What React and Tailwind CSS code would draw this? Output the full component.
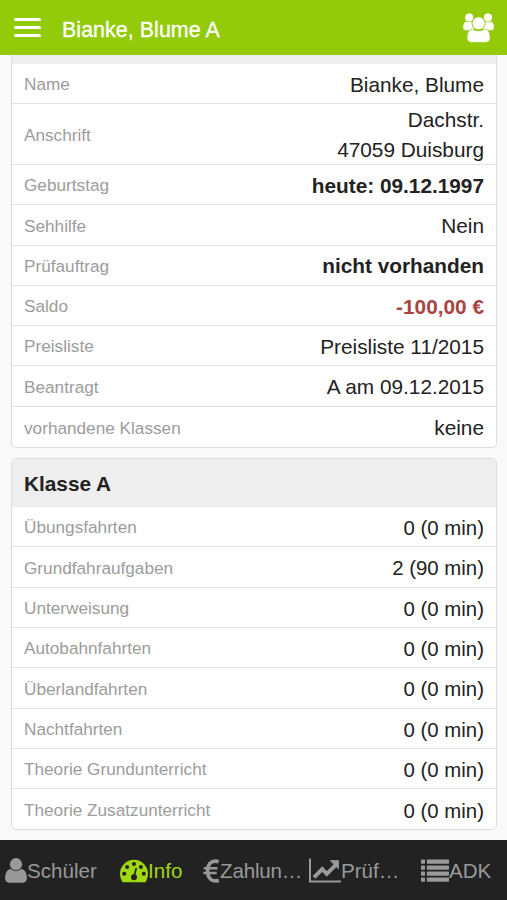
import { useState } from 'react'

const STAMMDATEN = [
  { label: 'Name', wert: 'Bianke, Blume' },
  { label: 'Anschrift', wert: ['Dachstr.', '47059 Duisburg'] },
  { label: 'Geburtstag', wert: 'heute: 09.12.1997', stil: 'font-bold' },
  { label: 'Sehhilfe', wert: 'Nein' },
  { label: 'Prüfauftrag', wert: 'nicht vorhanden', stil: 'font-bold' },
  { label: 'Saldo', wert: '-100,00 €', stil: 'font-bold text-[#a94442]' },
  { label: 'Preisliste', wert: 'Preisliste 11/2015' },
  { label: 'Beantragt', wert: 'A am 09.12.2015' },
  { label: 'vorhandene Klassen', wert: 'keine' },
]

const FAHRTEN = [
  { label: 'Übungsfahrten', wert: '0 (0 min)' },
  { label: 'Grundfahraufgaben', wert: '2 (90 min)' },
  { label: 'Unterweisung', wert: '0 (0 min)' },
  { label: 'Autobahnfahrten', wert: '0 (0 min)' },
  { label: 'Überlandfahrten', wert: '0 (0 min)' },
  { label: 'Nachtfahrten', wert: '0 (0 min)' },
  { label: 'Theorie Grundunterricht', wert: '0 (0 min)' },
  { label: 'Theorie Zusatzunterricht', wert: '0 (0 min)' },
]

function IconGruppe() {
  return (
    <svg viewBox="0 0 32 30" className="mt-0.5 w-8 h-[30px]" fill="#fff">
      <circle cx="6.2" cy="4.6" r="4.1" />
      <circle cx="25" cy="4.6" r="4.1" />
      <path d="M3 8.400c2 1.200 4.600 1.100 6.300.2 0 3 1.200 5.400 2.900 7.100-1.500.2-2.600.7-3.400 1.500H3.200C1.300 17.200.2 16 .2 14.200c0-2.500.9-5 2.800-5.800z" />
      <path d="M28.200 8.400c-2 1.200-4.600 1.100-6.300.2 0 3-1.200 5.400-2.900 7.100 1.500.2 2.600.7 3.400 1.500h5.600c1.900 0 3-1.200 3-3 0-2.500-.9-5-2.800-5.800z" />
      <path d="M9.300 16c3.800 2.400 8.800 2.400 12.600 0 3.600.3 5.300 4.600 5.300 8.800 0 2.800-1.700 4.600-4.400 4.600H8.400c-2.700 0-4.400-1.800-4.400-4.600 0-4.200 1.700-8.500 5.300-8.800z" stroke="#93cb0b" strokeWidth="0.7" />
      <circle cx="15.6" cy="10.3" r="6.6" stroke="#93cb0b" strokeWidth="1" />
    </svg>
  )
}

function IconPerson() {
  return (
    <svg viewBox="0 0 22 25" className="w-[22px] h-[25px]" fill="currentColor">
      <circle cx="11" cy="6.2" r="6.1" />
      <path d="M6 11.100c3 2.600 7 2.600 10 0 4.300.3 5.900 4.700 5.900 9.200 0 2.700-1.600 4.400-4.100 4.400H4.200C1.700 24.700.1 23 .1 20.300c0-4.500 1.600-8.900 5.900-9.200z" />
    </svg>
  )
}

function IconTacho() {
  return (
    <svg viewBox="0 0 28 24" className="w-7 h-6">
      <path d="M14 .8a14 14 0 0 0-14 14c0 2.700.8 5.300 2.200 7.900.2.400.6.600 1 .600h21.600c.4 0 .8-.2 1-.6 1.400-2.600 2.200-5.200 2.200-7.900A14 14 0 0 0 14 .8z" fill="currentColor" />
      <g fill="#222">
        <circle cx="4.2" cy="14.8" r="2" />
        <circle cx="7.1" cy="8" r="2" />
        <circle cx="14" cy="5" r="2" />
        <circle cx="20.9" cy="8" r="2" />
        <circle cx="23.8" cy="14.8" r="2" />
        <circle cx="14" cy="18.2" r="3" />
      </g>
      <path d="M14.200 17l1.900-7.400" stroke="#222" strokeWidth="1.7" strokeLinecap="round" />
    </svg>
  )
}

function IconEuro() {
  return (
    <svg viewBox="0 0 17 24" className="w-[17px] h-6" fill="none" stroke="currentColor">
      <path d="M15.600 2.800C9.500.5 4.600 4.500 4.600 12s4.900 11.600 11.200 9.200" strokeWidth="3.6" />
      <path d="M.8 9.300h13.700M.3 13.900h13.400" strokeWidth="2.5" />
    </svg>
  )
}

function IconVerlauf() {
  return (
    <svg viewBox="0 0 32 25" className="w-8 h-[25px]">
      <path d="M1 .5v23h31" fill="none" stroke="currentColor" strokeWidth="2" />
      <path d="M5 19.400l8.200-8.200 4.600 4.600 9-9" fill="none" stroke="currentColor" strokeWidth="4" />
      <path d="M21.200 2.600h8.300v8.300z" fill="currentColor" stroke="currentColor" strokeWidth="0.8" strokeLinejoin="round" />
    </svg>
  )
}

function IconListe() {
  return (
    <svg viewBox="0 0 28 24" className="w-7 h-6" fill="currentColor">
      {[0.5, 6.5, 12.5, 18.5].map(y => (
        <g key={y}>
          <rect x="0" y={y} width="4" height="4.2" rx="0.6" />
          <rect x="5.8" y={y} width="22.2" height="4.2" rx="0.6" />
        </g>
      ))}
    </svg>
  )
}

const TABS = [
  { key: 'schueler', label: 'Schüler', Icon: IconPerson, stil: 'ml-[5px] w-[115px]' },
  { key: 'info', label: 'Info', Icon: IconTacho, stil: 'w-[83px]' },
  { key: 'zahlungen', label: 'Zahlun…', Icon: IconEuro, stil: 'w-[106px] tracking-[-0.2px]' },
  { key: 'pruefungen', label: 'Prüf…', Icon: IconVerlauf, stil: 'w-28' },
  { key: 'adk', label: 'ADK', Icon: IconListe, stil: 'w-20' },
]

function Zeile({ label, wert, stil = '' }) {
  const zeilen = Array.isArray(wert) ? wert : [wert]
  return (
    <div className={`${zeilen.length > 1 ? 'h-[61px]' : 'h-[40.3px]'} flex shrink-0 items-center justify-between border-b border-[#e2e2e2] px-3 pt-[3px] last:border-b-0`}>
      <span className="text-[17.2px] text-[#9c9c9c]">{label}</span>
      <div className={`text-right leading-[30.5px] ${stil}`}>
        {zeilen.map(z => <div key={z}>{z}</div>)}
      </div>
    </div>
  )
}

export default function App() {
  const [aktiv, setAktiv] = useState('info')

  return (
    <div className="flex h-[900px] w-[507px] flex-col overflow-hidden bg-[#f9f9f9] font-['Liberation_Sans',sans-serif] text-[#222]">
      <header className="flex h-[54.5px] shrink-0 items-center bg-[#93cb0b] pr-3 pl-3.5 text-white">
        <button className="flex w-[27px] flex-col gap-[5px]">
          <span className="h-[3px] rounded-full bg-white" />
          <span className="h-[3px] rounded-full bg-white" />
          <span className="h-[3px] rounded-full bg-white" />
        </button>
        <h1 className="ml-[21px] flex-1 pt-[5px] text-[21.4px] tracking-[0.06px] [-webkit-text-stroke:0.3px_white]">Bianke, Blume A</h1>
        <IconGruppe />
      </header>

      <main className="flex min-h-0 flex-1 flex-col pr-2.5 pl-[11px]">
        <section className="flex h-[393px] shrink-0 flex-col rounded-b-[5px] border border-t-0 border-[#dcdcdc] bg-white text-[20.8px]">
          <div className="h-[9.2px] shrink-0 bg-[#eee]" />
          {STAMMDATEN.map(z => <Zeile key={z.label} {...z} />)}
        </section>

        <section className="mt-2.5 flex h-[372px] shrink-0 flex-col overflow-hidden rounded-[5px] border border-[#dcdcdc] bg-white text-[20.4px]">
          <h2 className="flex h-[48.7px] shrink-0 items-center border-b border-[#e8e8e8] bg-[#eee] px-3 pt-0.5 text-[20.8px] font-bold">Klasse A</h2>
          {FAHRTEN.map(z => <Zeile key={z.label} {...z} />)}
        </section>
      </main>

      <nav className="flex h-[60px] shrink-0 items-center bg-[#222] pt-0.5">
        {TABS.map(({ key, label, Icon, stil }) => (
          <button key={key} onClick={() => setAktiv(key)}
            className={`flex shrink-0 items-center text-[20.6px] ${stil} ${aktiv === key ? 'text-[#a0d911]' : 'text-[#999]'}`}>
            <Icon />
            <span>{label}</span>
          </button>
        ))}
      </nav>
    </div>
  )
}
